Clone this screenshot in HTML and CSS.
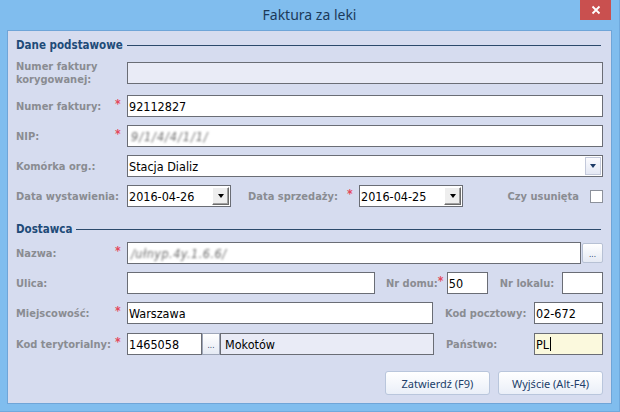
FILE: index.html
```html
<!DOCTYPE html>
<html>

<head>
    <title>Faktura za leki</title>
    <meta charset="utf-8">
    <link rel="stylesheet" href="styles.css">
</head>

<body>

    <div class="window">
        <div class="titlebar">
            <span class="title">Faktura za leki</span>
            <div class="close-btn">
                <svg width="10" height="10" viewBox="0 0 10 10">
                    <path d="M1.5 1.5 L8.5 8.5 M8.5 1.5 L1.5 8.5" stroke="#fff" stroke-width="1.8" fill="none" />
                </svg>
            </div>
        </div>

        <div class="client">
            <!-- Dane podstawowe -->
            <div class="section s-first">
                <span class="section-title">Dane podstawowe</span>
                <div class="rule"></div>
            </div>

            <div class="row r1">
                <span class="label wrap">Numer faktury korygowanej:</span><span class="star"></span>
                <div class="field disabled grow"></div>
            </div>

            <div class="row r2">
                <span class="label">Numer faktury:</span><span class="star">*</span>
                <div class="field grow">92112827</div>
            </div>

            <div class="row">
                <span class="label">NIP:</span><span class="star">*</span>
                <div class="field grow"><span class="blurred">9/1/4/4/1/1/</span></div>
            </div>

            <div class="row">
                <span class="label">Komórka org.:</span><span class="star"></span>
                <div class="field grow select">
                    <span class="value">Stacja Dializ</span>
                    <span class="drop-btn"><span class="tri navy"></span></span>
                </div>
            </div>

            <div class="row">
                <span class="label">Data wystawienia:</span><span class="star"></span>
                <div class="field date">
                    <span class="value">2016-04-26</span>
                    <span class="date-btn"><span class="tri"></span></span>
                </div>
                <span class="label second">Data sprzedaży:</span><span class="star">*</span>
                <div class="field date">
                    <span class="value">2016-04-25</span>
                    <span class="date-btn"><span class="tri"></span></span>
                </div>
                <span class="label check-label">Czy usunięta</span>
                <span class="checkbox"></span>
            </div>

            <!-- Dostawca -->
            <div class="section s-second">
                <span class="section-title">Dostawca</span>
                <div class="rule"></div>
            </div>

            <div class="row r-nazwa">
                <span class="label">Nazwa:</span><span class="star">*</span>
                <div class="field grow"><span class="blurred wide">/ułnyp.4y.1.6.6/</span></div>
                <span class="dots-btn">...</span>
            </div>

            <div class="row">
                <span class="label">Ulica:</span><span class="star"></span>
                <div class="field street"></div>
                <span class="label inline nr-domu">Nr domu:</span><span class="star narrow">*</span>
                <div class="field tiny">50</div>
                <span class="label inline nr-lokalu">Nr lokalu:</span>
                <div class="field tiny push"></div>
            </div>

            <div class="row">
                <span class="label">Miejscowość:</span><span class="star">*</span>
                <div class="field city">Warszawa</div>
                <span class="label inline col2">Kod pocztowy:</span>
                <div class="field small push">02-672</div>
            </div>

            <div class="row r-kod">
                <span class="label">Kod terytorialny:</span><span class="star">*</span>
                <div class="field code">1465058</div>
                <span class="dots-btn tall">...</span>
                <div class="field disabled district">Mokotów</div>
                <span class="label inline col2">Państwo:</span>
                <div class="field small push focused">PL<span class="caret"></span></div>
            </div>

            <div class="buttons">
                <button class="btn">Zatwierdź (F9)</button>
                <button class="btn">Wyjście (Alt-F4)</button>
            </div>
        </div>
    </div>

</body>

</html>
```

FILE: styles.css
```css
body {
    margin: 0;
    width: 620px;
    height: 412px;
    overflow: hidden;
    font-family: "DejaVu Sans Condensed", "DejaVu Sans", sans-serif;
}

.window {
    width: 620px;
    height: 412px;
    background: #80bdee;
    box-sizing: border-box;
    border-right: 1px solid #6fa9dd;
    border-bottom: 1px solid #6fa9dd;
}

.titlebar {
    position: relative;
    height: 30px;
    display: flex;
    justify-content: center;
    align-items: center;
}

.title {
    font-family: "Noto Sans", sans-serif;
    font-size: 14px;
    color: #1c3a5a;
    margin-top: -1px;
}

.close-btn {
    position: absolute;
    top: 0;
    right: 8px;
    width: 31px;
    height: 20px;
    background: #c9504f;
    display: flex;
    justify-content: center;
    align-items: center;
}

.client {
    margin-left: 7px;
    width: 605px;
    height: 374px;
    box-sizing: border-box;
    background: #d6dcef;
    border: 1px solid #6fa5d8;
    padding: 0 8px;
}

/* section headers */
.section {
    display: flex;
    align-items: center;
    height: 14px;
}

.s-first {
    margin-top: 7px;
}

.s-second {
    margin-top: 15px;
}

.section-title {
    font-weight: bold;
    font-size: 11.5px;
    color: #1e4b78;
    margin-right: 4px;
}

.rule {
    flex: 1;
    height: 1px;
    background: #2c4a6b;
    margin-right: 2px;
}

/* rows */
.row {
    display: flex;
    align-items: center;
    height: 22px;
    margin-top: 8px;
}

.r1 {
    margin-top: 10px;
}

.r2 {
    margin-top: 11px;
}

.r-nazwa {
    margin-top: 6px;
}

.r-kod {
    margin-top: 9px;
}

.label {
    flex: 0 0 99px;
    min-width: 0;
    font-weight: bold;
    font-size: 11px;
    color: #8a8c92;
    white-space: nowrap;
}

.label.wrap {
    white-space: normal;
    line-height: 13px;
}

.label.second {
    margin-left: 17px;
}

.label.inline {
    flex: 0 0 auto;
}

.nr-domu {
    margin-left: 11px;
}

.nr-lokalu {
    margin-left: 12px;
}

.col2 {
    margin-left: 12px;
}

.check-label {
    flex: 0 0 auto;
    margin-left: auto;
    margin-right: 11px;
}

.star {
    flex: 0 0 12px;
    color: #e4485a;
    font-size: 12px;
    font-weight: bold;
    align-self: flex-start;
    margin-top: 3px;
    height: 12px;
    line-height: 12px;
}

.star.narrow {
    flex: 0 0 9px;
    margin-left: 0;
}

/* inputs */
.field {
    height: 22px;
    box-sizing: border-box;
    border: 1px solid #6a6d75;
    background: white;
    font-size: 12.5px;
    color: #000;
    padding-left: 1px;
    display: flex;
    align-items: center;
    white-space: nowrap;
}

.field.grow {
    flex: 1;
}

.field.disabled {
    background: #e9ebf6;
}

.field.focused {
    background: #fbf9dd;
}

.push {
    margin-left: auto;
}

.street {
    width: 248px;
}

.tiny {
    width: 41px;
}

.city {
    width: 306px;
}

.small {
    width: 69px;
}

.code {
    width: 75px;
}

.district {
    width: 214px;
    padding-left: 4px;
}

.date {
    width: 104px;
}

.value {
    flex: 1;
}

.caret {
    display: inline-block;
    width: 1px;
    height: 14px;
    background: #000;
    margin-left: 1px;
}

.blurred {
    color: #6e6e6e;
    font-style: italic;
    letter-spacing: 1px;
    filter: blur(1.3px);
    padding-left: 2px;
}

.blurred.wide {
    letter-spacing: 0.5px;
}

.select .drop-btn {
    width: 16px;
    height: 18px;
    margin-right: 1px;
    box-sizing: border-box;
    border: 1px solid #c3c9da;
    background: linear-gradient(#fbfbfe, #e4e8f4);
    display: flex;
    justify-content: center;
    align-items: center;
}

.date-btn {
    width: 17px;
    height: 18px;
    margin-right: 1px;
    box-sizing: border-box;
    background: #eeeeee;
    border: 1px solid;
    border-color: #ffffff #6b6b6b #6b6b6b #ffffff;
    box-shadow: inset -1px -1px 0 #a0a0a0;
    display: flex;
    justify-content: center;
    align-items: center;
}

.tri {
    width: 0;
    height: 0;
    border-left: 3.5px solid transparent;
    border-right: 3.5px solid transparent;
    border-top: 4px solid #000;
}

.tri.navy {
    border-top-color: #1d3b66;
}

.checkbox {
    width: 13px;
    height: 13px;
    box-sizing: border-box;
    border: 1px solid #8c919b;
    background: white;
}

.dots-btn {
    width: 21px;
    height: 20px;
    margin-left: 1px;
    box-sizing: border-box;
    border: 1px solid #b7c1d4;
    border-radius: 2px;
    background: linear-gradient(#ffffff, #e5eaf4);
    color: #2a3f66;
    font-size: 8px;
    display: flex;
    justify-content: center;
    align-items: center;
    padding-top: 3px;
}

.dots-btn.tall {
    width: 18px;
    height: 22px;
    margin-left: 0;
    border-radius: 0;
    border-color: #9ea6b8;
}

/* bottom buttons */
.buttons {
    display: flex;
    justify-content: flex-end;
    gap: 8px;
    margin-top: 16px;
}

.btn {
    width: 105px;
    height: 24px;
    border: 1px solid #b9c6dc;
    border-radius: 3px;
    background: linear-gradient(#ffffff, #eaeff8);
    font-family: "Noto Sans", sans-serif;
    font-size: 11px;
    color: #223e6a;
    padding: 0;
}
```
